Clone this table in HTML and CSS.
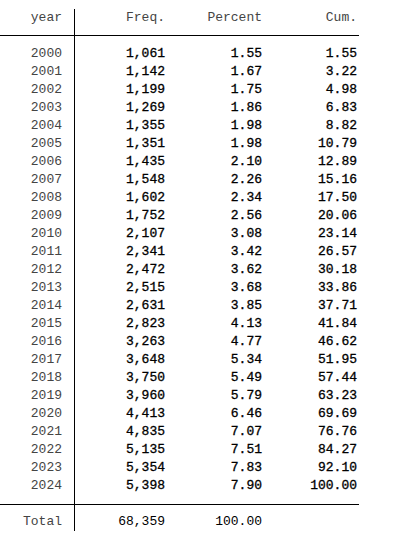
FILE: index.html
```html
<!DOCTYPE html>
<html lang="en">
<head>
  <meta charset="UTF-8">
  <title>year tabulation</title>
  <link rel="stylesheet" href="styles.css">
</head>
<body>
  <table class="tab">
    <thead>
      <tr>
        <th class="lbl">year</th>
        <th class="freq">Freq.</th>
        <th class="pct">Percent</th>
        <th class="cum">Cum.</th>
      </tr>
    </thead>
    <tbody id="rows"></tbody>
    <tfoot>
      <tr>
        <td class="lbl">Total</td>
        <td class="freq num">68,359</td>
        <td class="pct num">100.00</td>
        <td class="cum"></td>
      </tr>
    </tfoot>
  </table>

  <script>
    // year, freq, percent, cumulative
    const data = [
      [2000, "1,061", "1.55", "1.55"],
      [2001, "1,142", "1.67", "3.22"],
      [2002, "1,199", "1.75", "4.98"],
      [2003, "1,269", "1.86", "6.83"],
      [2004, "1,355", "1.98", "8.82"],
      [2005, "1,351", "1.98", "10.79"],
      [2006, "1,435", "2.10", "12.89"],
      [2007, "1,548", "2.26", "15.16"],
      [2008, "1,602", "2.34", "17.50"],
      [2009, "1,752", "2.56", "20.06"],
      [2010, "2,107", "3.08", "23.14"],
      [2011, "2,341", "3.42", "26.57"],
      [2012, "2,472", "3.62", "30.18"],
      [2013, "2,515", "3.68", "33.86"],
      [2014, "2,631", "3.85", "37.71"],
      [2015, "2,823", "4.13", "41.84"],
      [2016, "3,263", "4.77", "46.62"],
      [2017, "3,648", "5.34", "51.95"],
      [2018, "3,750", "5.49", "57.44"],
      [2019, "3,960", "5.79", "63.23"],
      [2020, "4,413", "6.46", "69.69"],
      [2021, "4,835", "7.07", "76.76"],
      [2022, "5,135", "7.51", "84.27"],
      [2023, "5,354", "7.83", "92.10"],
      [2024, "5,398", "7.90", "100.00"]
    ];

    const body = document.getElementById("rows");
    data.forEach(function (d) {
      const row = document.createElement("tr");
      row.innerHTML = `
        <td class="lbl">${d[0]}</td>
        <td class="freq num">${d[1]}</td>
        <td class="pct num">${d[2]}</td>
        <td class="cum num">${d[3]}</td>
      `;
      body.appendChild(row);
    });
  </script>
</body>
</html>
```

FILE: styles.css
```css
body {
  margin: 0;
  padding: 0;
  background: #fff;
  font-family: "Liberation Mono", "Courier New", monospace;
  font-size: 13px;
  color: #444;
}
.tab {
  border-collapse: collapse;
  margin-top: 9px;
}
.tab th,
.tab td {
  padding: 0;
  height: 18px;
  line-height: 18px;
  text-align: right;
  font-weight: normal;
  white-space: nowrap;
}
.lbl {
  width: 62px;
  padding-right: 12px !important;
  border-right: 1px solid #000;
}
.freq {
  width: 90px;
}
.pct {
  width: 97px;
}
.cum {
  width: 95px;
  padding-right: 2px !important;
}
.num {
  color: #000;
}
tbody .num {
  -webkit-text-stroke: 0.3px #000;
}
thead tr {
  border-bottom: 1px solid #000;
}
thead th {
  padding-bottom: 8px !important;
}
tbody tr:first-child td {
  padding-top: 9px;
}
tbody tr:last-child td {
  padding-bottom: 9px;
}
tfoot tr {
  border-top: 1px solid #000;
}
tfoot td {
  padding-top: 8px !important;
}
```
